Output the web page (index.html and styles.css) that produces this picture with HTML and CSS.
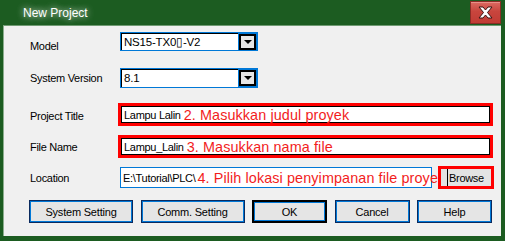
FILE: index.html
```html
<!DOCTYPE html>
<html lang="en">
<head>
    <meta charset="UTF-8">
    <title>New Project</title>
    <link rel="stylesheet" href="styles.css">
</head>
<body>
    <div class="window">
        <div class="titlebar">
            <span class="title">New Project</span>
            <div class="close">
                <svg width="17" height="13" viewBox="0 0 17 13">
                    <path d="M2 1h4l2.5 3 2.5-3h4l-4.5 5.5 4.5 5.5h-4l-2.5-3-2.5 3h-4l4.5-5.5z" fill="#fff" stroke="#3a1412" stroke-width="1"/>
                </svg>
            </div>
        </div>
        <div class="dialog">
            <div class="row row-model">
                <label>Model</label>
                <div class="combo">
                    <span class="combo-text">NS15-TX0&#x25AF;-V2</span>
                    <span class="combo-btn"><i class="arrow"></i></span>
                </div>
            </div>
            <div class="row row-version">
                <label>System Version</label>
                <div class="combo">
                    <span class="combo-text">8.1</span>
                    <span class="combo-btn"><i class="arrow"></i></span>
                </div>
            </div>
            <div class="row row-title">
                <label>Project Title</label>
                <div class="mark">
                    <div class="field">Lampu Lalin <span class="note">2. Masukkan judul proyek</span></div>
                </div>
            </div>
            <div class="row row-file">
                <label>File Name</label>
                <div class="mark">
                    <div class="field">Lampu_Lalin <span class="note">3. Masukkan nama file</span></div>
                </div>
            </div>
            <div class="row row-location">
                <label>Location</label>
                <div class="location">E:\Tutorial\PLC\<span class="note">4. Pilih lokasi penyimpanan file proyek</span></div>
                <div class="mark mark-browse">
                    <button class="browse">Browse</button>
                </div>
            </div>
            <div class="buttons">
                <button class="btn wide">System Setting</button>
                <button class="btn wide">Comm. Setting</button>
                <button class="btn default">OK</button>
                <button class="btn">Cancel</button>
                <button class="btn">Help</button>
            </div>
        </div>
    </div>
</body>
</html>
```

FILE: styles.css
```css
html, body {
    margin: 0;
    padding: 0;
}
body {
    font-family: "Liberation Sans", Arial, sans-serif;
    font-size: 11px;
    background: #1c5c21;
}
.window {
    width: 505px;
    height: 241px;
    box-sizing: border-box;
    padding: 0 4px 5px 3px;
    background: #1c5c21;
    display: flex;
    flex-direction: column;
}
.titlebar {
    height: 25px;
    display: flex;
    align-items: flex-start;
}
.title {
    color: #fff;
    font-size: 12px;
    padding-left: 20px;
    line-height: 26px;
    text-shadow: 0 0 6px rgba(255, 255, 255, 0.7), 0 0 10px rgba(255, 255, 255, 0.4);
}
.close {
    margin-left: auto;
    margin-top: 1px;
    width: 31px;
    height: 23px;
    box-sizing: border-box;
    border: 1px solid #8b2c26;
    background: linear-gradient(#dc6a62, #c8453d 45%, #c13c35);
    box-shadow: inset 0 1px 0 #ea8f88;
    display: flex;
    align-items: center;
    justify-content: center;
}
.dialog {
    flex: 1;
    background: #f0f0f0;
    border-top: 1px solid #6f9a72;
    border-left: 1px solid #8aad8c;
    padding: 6px 8px 0 26px;
    color: #000;
}
.row {
    display: flex;
    align-items: center;
    letter-spacing: -0.3px;
}
.row label {
    width: 88px;
    flex: none;
}
.row-model { height: 19px; }
.row-model label { margin-top: 9px; }
.row-version { height: 20px; margin-top: 17px; }
.row-title { height: 23px; margin-top: 15px; }
.row-title label { margin-top: 3px; }
.row-file { height: 23px; margin-top: 9px; }
.row-location { height: 23px; margin-top: 8px; }

.combo {
    margin-left: 2px;
    width: 138px;
    height: 100%;
    box-sizing: border-box;
    border: 1px solid #0078d7;
    box-shadow: inset 1px 1px 0 #000;
    background: #fff;
    display: flex;
    align-items: center;
}
.combo-text {
    flex: 1;
    padding-left: 3px;
    font-size: 11.5px;
    letter-spacing: -0.2px;
}
.combo-btn {
    width: 17px;
    height: 16px;
    margin-right: 1px;
    box-sizing: border-box;
    border: 2px solid #000;
    outline: 1px solid #0078d7;
    background: #e6e6e6;
    display: flex;
    align-items: center;
    justify-content: center;
}
.arrow {
    width: 0;
    height: 0;
    border-left: 4px solid transparent;
    border-right: 4px solid transparent;
    border-top: 4px solid #000;
}

.mark {
    flex: 1;
    height: 100%;
    box-sizing: border-box;
    border: 3px solid #f00;
    display: flex;
}
.field {
    flex: 1;
    box-sizing: border-box;
    border: 1px solid #000;
    background: #fff;
    padding-left: 2px;
    display: flex;
    align-items: center;
    white-space: nowrap;
}
.note {
    color: #f21d1d;
    font-size: 14.4px;
    letter-spacing: 0.1px;
    margin-left: 3px;
}
.location {
    margin-left: 2px;
    width: 312px;
    height: 21px;
    box-sizing: border-box;
    border: 1px solid #0078d7;
    background: #fff;
    padding-left: 2px;
    display: flex;
    align-items: center;
    white-space: nowrap;
    overflow: visible;
}
.location .note {
    margin-left: 2px;
}
.mark-browse {
    flex: none;
    width: 56px;
    margin-left: 6px;
    background: #e3e3e3;
}
.browse {
    flex: 1;
    margin: 0 0 0 6px;
    padding: 0 0 0 1px;
    border: none;
    border-left: 1px solid #000;
    background: #e3e3e3;
    font-family: "Liberation Sans", Arial, sans-serif;
    font-size: 11px;
    letter-spacing: -0.3px;
    text-align: left;
}

.buttons {
    display: flex;
    gap: 7.5px;
    margin-top: 11px;
    margin-left: -1px;
}
.btn {
    width: 75px;
    height: 23px;
    margin: 0;
    box-sizing: border-box;
    border: 1px solid #0a2a5e;
    box-shadow: inset 0 0 0 1px #0078d7;
    background: #e5e5e5;
    font-family: "Liberation Sans", Arial, sans-serif;
    font-size: 11px;
    letter-spacing: -0.2px;
    color: #000;
}
.btn.wide {
    width: 104px;
}
.btn.default {
    border: 2px solid #000;
    box-shadow: inset 0 0 0 1px #0078d7;
}
```
